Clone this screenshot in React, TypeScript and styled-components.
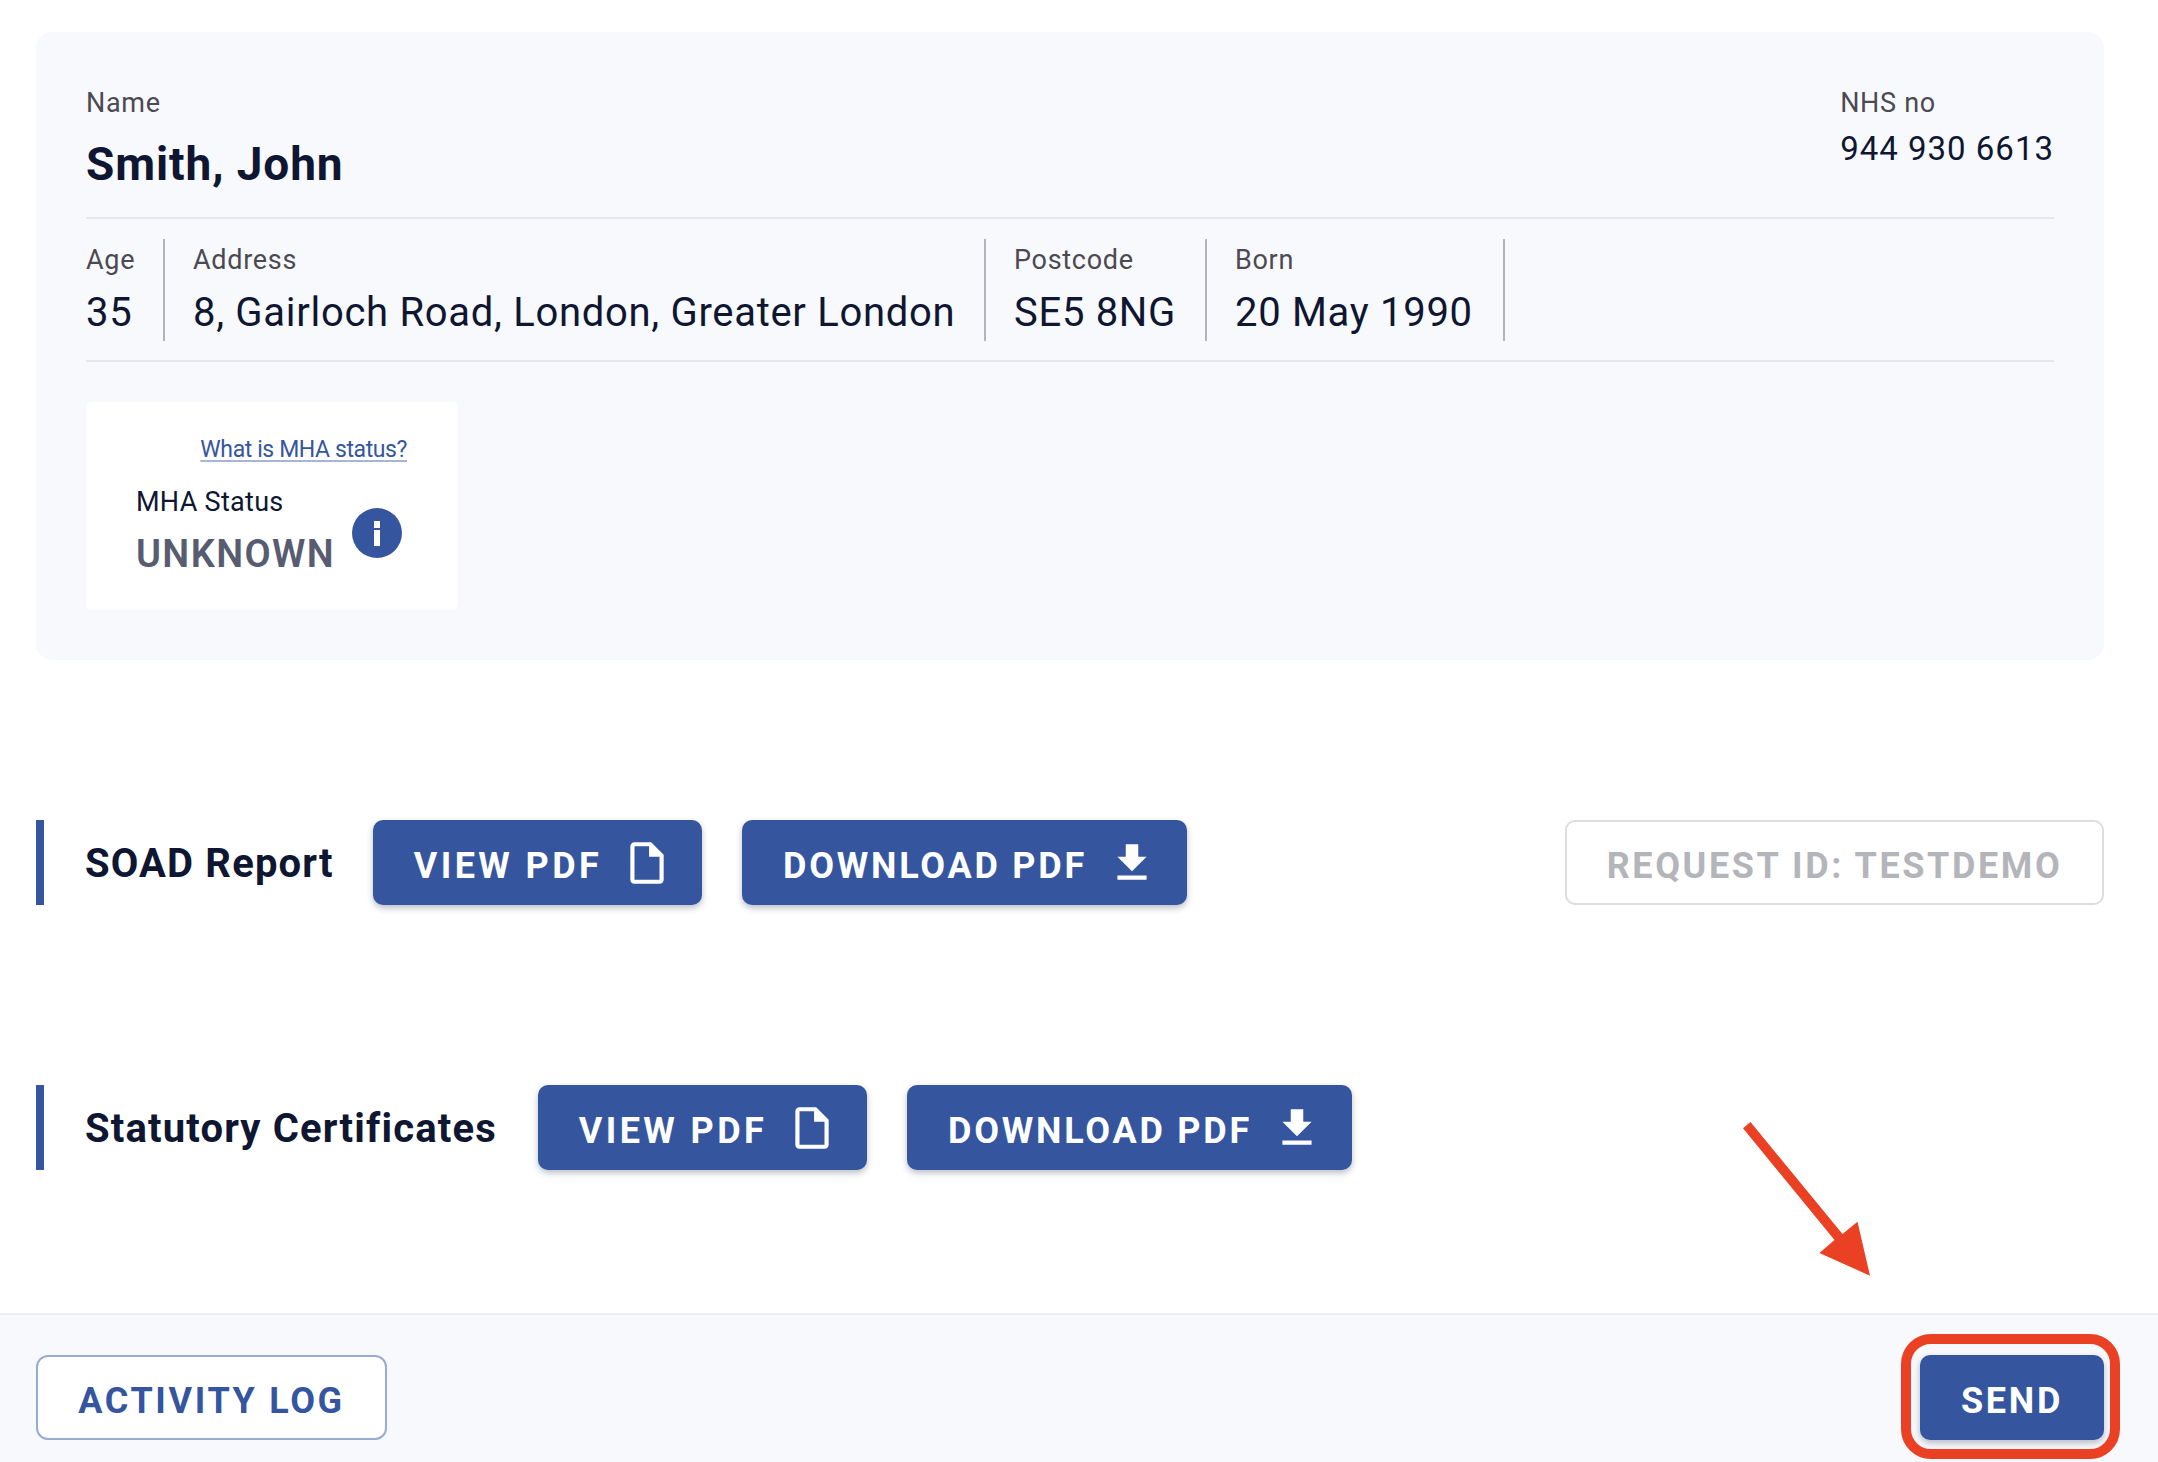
import React from "react";
import styled, { createGlobalStyle } from "styled-components";
import { MdFileDownload, MdOutlineInsertDriveFile } from "react-icons/md";

const BLUE = "#35569f";
const INK = "#0f1631";
const FONT = `Roboto, "Noto Sans", sans-serif`;

const GlobalStyle = createGlobalStyle`
  html, body {
    margin: 0;
    padding: 0;
    background: #fff;
  }
  body {
    font-family: ${FONT};
    color: ${INK};
  }
  * {
    box-sizing: border-box;
  }
`;

const Page = styled.div`
  position: relative;
  display: flex;
  flex-direction: column;
  width: 2158px;
  height: 1462px;
  overflow: hidden;
`;

const Card = styled.section`
  margin: 32px 54px 0 36px;
  padding: 53px 50px 50px;
  background: #f8f9fc;
  border-radius: 16px;
`;

const HeaderRow = styled.div`
  display: flex;
  justify-content: space-between;
  padding-bottom: 25px;
  border-bottom: 2px solid #e6e7ec;
`;

const Label = styled.div`
  font-size: 27px;
  line-height: 36px;
  letter-spacing: 0.7px;
  color: #4c4953;
`;

const Name = styled.div`
  margin-top: 15px;
  font-size: 46px;
  line-height: 56px;
  font-weight: 700;
  letter-spacing: 0.9px;
  color: ${INK};
`;

const NhsValue = styled.div`
  margin-top: 6px;
  font-size: 33px;
  line-height: 44px;
  letter-spacing: 1px;
  color: ${INK};
`;

const Details = styled.div`
  display: grid;
  grid-template-columns: 79px 821px 221px 298px;
  margin-top: 20px;
  padding-bottom: 19px;
`;

const DetailCell = styled.div<{ $first?: boolean }>`
  height: 102px;
  padding: 3px 0 0 ${(p) => (p.$first ? 0 : 28)}px;
  border-right: 2px solid #b3b3bb;
  white-space: nowrap;
`;

const DetailValue = styled.div`
  margin-top: 10px;
  font-size: 40px;
  line-height: 50px;
  letter-spacing: 0.7px;
  color: ${INK};
`;

const Rule = styled.div`
  height: 2px;
  background: #e6e7ec;
`;

const StatusBox = styled.div`
  width: 372px;
  height: 208px;
  margin-top: 40px;
  padding: 33px 51px 0 50px;
  background: #fff;
  border-radius: 6px;
`;

const StatusLink = styled.a`
  display: block;
  text-align: right;
  font-size: 23px;
  line-height: 30px;
  letter-spacing: -0.4px;
  color: ${BLUE};
  text-decoration: underline 2px #a7b6d8;
  text-underline-offset: 3px;
`;

const StatusRow = styled.div`
  display: flex;
  align-items: center;
  gap: 17px;
  margin-top: 19px;
  white-space: nowrap;
`;

const StatusLabel = styled.div`
  font-size: 27px;
  line-height: 36px;
  letter-spacing: 0.3px;
  color: ${INK};
`;

const StatusValue = styled.div`
  margin-top: 12px;
  font-size: 38px;
  line-height: 44px;
  font-weight: 600;
  letter-spacing: 1.4px;
  color: #585c70;
`;

const InfoCircle = styled.svg`
  flex: none;
  margin-top: 6px;
`;

const InfoIcon = () => (
  <InfoCircle width="50" height="50" viewBox="0 0 50 50">
    <circle cx="25" cy="25" r="25" fill={BLUE} />
    <rect x="22" y="13" width="6" height="7" fill="#fff" />
    <rect x="22" y="22" width="6" height="16" fill="#fff" />
  </InfoCircle>
);

const ReportRow = styled.div<{ $top: number }>`
  display: flex;
  align-items: center;
  gap: 41px;
  height: 85px;
  margin: ${(p) => p.$top}px 54px 0 36px;
  padding-left: 41px;
  border-left: 8px solid ${BLUE};
`;

const ReportTitle = styled.h2<{ $width: number }>`
  width: ${(p) => p.$width}px;
  margin: 0;
  padding-top: 3px;
  font-size: 40px;
  line-height: 50px;
  font-weight: 700;
  letter-spacing: 1.15px;
  white-space: nowrap;
  color: ${INK};
`;

const Actions = styled.div`
  display: flex;
  gap: 40px;
`;

const Button = styled.button<{ $width: number; $spacing?: number }>`
  display: flex;
  align-items: center;
  justify-content: center;
  width: ${(p) => p.$width}px;
  height: 85px;
  padding: 6px 0 0 11px;
  border: 0;
  border-radius: 10px;
  background: ${BLUE};
  color: #fff;
  font-family: ${FONT};
  font-size: 36px;
  font-weight: 700;
  letter-spacing: ${(p) => p.$spacing ?? 2.7}px;
  white-space: nowrap;
  box-shadow: 0 3px 6px rgba(30, 40, 70, 0.3);
  svg {
    flex: none;
    margin: -6px 0 0 20px;
  }
`;

const SendButton = styled(Button)`
  padding-left: 0;
`;

const RequestId = styled.div`
  display: flex;
  align-items: center;
  justify-content: center;
  width: 539px;
  height: 85px;
  margin-left: auto;
  padding-top: 6px;
  background: #fff;
  border: 2px solid #dcdde1;
  border-radius: 10px;
  color: #b4b5ba;
  font-size: 36px;
  font-weight: 700;
  letter-spacing: 2.6px;
  white-space: nowrap;
`;

const Footer = styled.footer`
  display: flex;
  justify-content: space-between;
  align-items: flex-start;
  margin-top: auto;
  height: 149px;
  padding: 40px 54px 0 36px;
  background: #f8f9fc;
  border-top: 2px solid #ecedf2;
`;

const LogButton = styled.button`
  width: 351px;
  height: 85px;
  padding: 7px 0 0;
  background: #fff;
  border: 2px solid #98abd0;
  border-radius: 12px;
  color: ${BLUE};
  font-family: ${FONT};
  font-size: 36px;
  font-weight: 700;
  letter-spacing: 2.65px;
`;

const SendWrap = styled.div`
  position: relative;
`;

// red annotation drawn on top of the screenshot
const Highlight = styled.div`
  position: absolute;
  top: -21px;
  left: -19px;
  right: -16px;
  bottom: -19px;
  border: 10px solid #ea4125;
  border-radius: 30px;
  pointer-events: none;
`;

const ArrowOverlay = styled.svg`
  position: absolute;
  left: 1730px;
  top: 1110px;
`;

const ReportActions = () => (
  <Actions>
    <Button $width={329} $spacing={3.4}>
      VIEW PDF
      <MdOutlineInsertDriveFile size={50} />
    </Button>
    <Button $width={445} $spacing={2.75}>
      DOWNLOAD PDF
      <MdFileDownload size={50} />
    </Button>
  </Actions>
);

export default function App() {
  return (
    <Page>
      <GlobalStyle />
      <Card>
        <HeaderRow>
          <div>
            <Label>Name</Label>
            <Name>Smith, John</Name>
          </div>
          <div>
            <Label>NHS no</Label>
            <NhsValue>944 930 6613</NhsValue>
          </div>
        </HeaderRow>
        <Details>
          <DetailCell $first>
            <Label>Age</Label>
            <DetailValue>35</DetailValue>
          </DetailCell>
          <DetailCell>
            <Label>Address</Label>
            <DetailValue>8, Gairloch Road, London, Greater London</DetailValue>
          </DetailCell>
          <DetailCell>
            <Label>Postcode</Label>
            <DetailValue>SE5 8NG</DetailValue>
          </DetailCell>
          <DetailCell>
            <Label>Born</Label>
            <DetailValue>20 May 1990</DetailValue>
          </DetailCell>
        </Details>
        <Rule />
        <StatusBox>
          <StatusLink href="#">What is MHA status?</StatusLink>
          <StatusRow>
            <div>
              <StatusLabel>MHA Status</StatusLabel>
              <StatusValue>UNKNOWN</StatusValue>
            </div>
            <InfoIcon />
          </StatusRow>
        </StatusBox>
      </Card>

      <ReportRow $top={160}>
        <ReportTitle $width={247}>SOAD Report</ReportTitle>
        <ReportActions />
        <RequestId>REQUEST ID: TESTDEMO</RequestId>
      </ReportRow>

      <ReportRow $top={180}>
        <ReportTitle $width={412}>Statutory Certificates</ReportTitle>
        <ReportActions />
      </ReportRow>

      <Footer>
        <LogButton>ACTIVITY LOG</LogButton>
        <SendWrap>
          <SendButton $width={184}>SEND</SendButton>
          <Highlight />
        </SendWrap>
      </Footer>

      <ArrowOverlay width="160" height="180" viewBox="1730 1110 160 180">
        <polygon
          points="1750.5,1122 1743,1128.3 1834.5,1240 1819.4,1253 1870,1275.7 1857.5,1221.7 1842.5,1234"
          fill="#ea4125"
        />
      </ArrowOverlay>
    </Page>
  );
}
